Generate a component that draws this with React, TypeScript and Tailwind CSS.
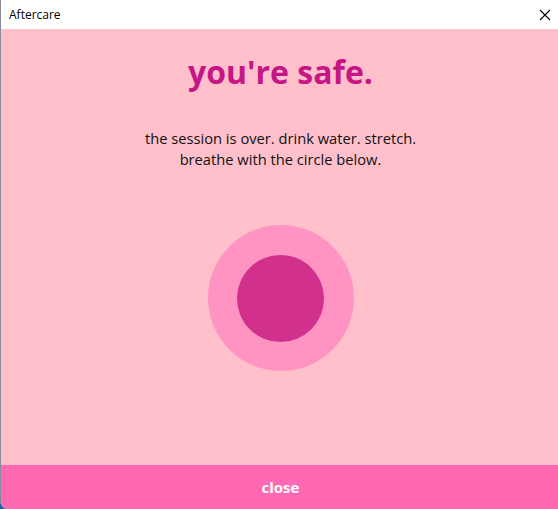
export default function App() {
  return (
    <div className="w-[558px] h-[509px] bg-[#1d5fa8] overflow-hidden" style={{ fontFamily: '"Open Sans", "Noto Sans", sans-serif' }}>
      <div className="w-[560px] h-[509px] flex flex-col bg-[#ffc0cb] border-l border-[#8a8a9a] rounded-bl-[8px] overflow-hidden">
        <div className="h-[29px] shrink-0 bg-white flex items-center justify-between pl-[8px] pr-[6px]">
          <span className="text-[12px] text-black">Aftercare</span>
          <svg width="12" height="12" viewBox="0 0 12 12" className="mr-[3px]">
            <path d="M1 1 L11 11 M11 1 L1 11" stroke="#000" strokeWidth="1.1" />
          </svg>
        </div>
        <div className="flex-1 flex flex-col items-center pt-[22px]">
          <h1 className="text-[32px] leading-[42px] font-bold text-[#c71585]">you're safe.</h1>
          <p className="mt-[35px] text-[14.7px] leading-[21px] text-[#111111] text-center">
            the session is over. drink water. stretch.
            <br />
            breathe with the circle below.
          </p>
          <div className="mt-[55px] w-[146px] h-[146px] rounded-full bg-[#ff94c2] flex items-center justify-center">
            <div className="w-[87px] h-[87px] rounded-full bg-[#d2308d]" />
          </div>
        </div>
        <button className="h-[44px] shrink-0 bg-[#ff69b4] text-white font-bold text-[15px] w-full">close</button>
      </div>
    </div>
  );
}
